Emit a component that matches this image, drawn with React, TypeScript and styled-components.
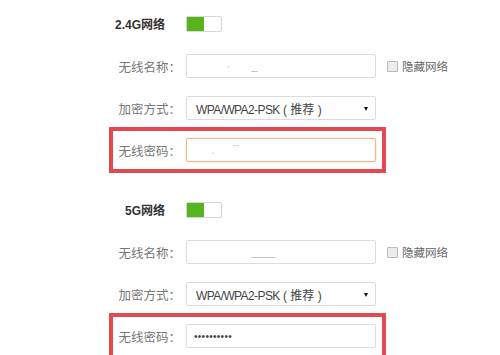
import React from 'react'
import styled, { createGlobalStyle } from 'styled-components'

const GlobalStyle = createGlobalStyle`
  html, body {
    margin: 0;
    padding: 0;
    background: #ffffff;
  }
  body {
    font-family: "Liberation Sans", "Noto Sans CJK SC", sans-serif;
    font-size: 12px;
    color: #666666;
  }
`

const Page = styled.div`
  width: 500px;
  height: 355px;
  overflow: hidden;
  padding: 2px 0 0 111px;
  box-sizing: border-box;
`

const Section = styled.div<{ $gap?: number }>`
  display: flex;
  flex-direction: column;
  margin-top: ${props => props.$gap || 0}px;
`

const Header = styled.div`
  display: flex;
  align-items: center;
  height: 43px;
`

const HeaderLabel = styled.div`
  width: 54px;
  text-align: right;
  margin-right: 21px;
  font-weight: bold;
  color: #333333;
  font-size: 12px;
`

const Toggle = styled.div<{ $on?: boolean }>`
  width: 36px;
  height: 16px;
  box-sizing: border-box;
  border: 1px solid #d6d6d6;
  border-radius: 2px;
  background: #ffffff;
  display: flex;
  &::before {
    content: '';
    width: 17px;
    height: 100%;
    background: ${props => (props.$on ? '#56b51d' : '#dddddd')};
  }
`

const Row = styled.div<{ $alert?: boolean }>`
  display: flex;
  align-items: center;
  height: 42px;
  width: 273px;
  outline: ${props => (props.$alert ? '4px solid #e34a4f' : 'none')};
  outline-offset: -2px;
`

const Label = styled.div`
  width: 70px;
  flex-shrink: 0;
  margin-right: 5px;
  text-align: right;
  color: #777777;
  font-size: 12.5px;
  font-family: "Noto Sans CJK SC", sans-serif;
`

const Field = styled.div<{ $focus?: boolean }>`
  width: 190px;
  height: 24px;
  flex-shrink: 0;
  box-sizing: border-box;
  border: 1px solid ${props => (props.$focus ? '#f3b783' : '#dcdcdc')};
  box-shadow: ${props => (props.$focus ? '0 0 2px rgba(243, 160, 90, 0.5)' : 'none')};
  border-radius: 2px;
  background: #ffffff;
  display: flex;
  align-items: center;
  padding: 0 9px;
  position: relative;
`

const Faint = styled.span`
  white-space: pre;
  color: #b5b5b5;
  font-size: 11px;
  line-height: 1;
`

const Dots = styled.span`
  color: #444444;
  font-size: 10px;
  letter-spacing: 0.3px;
  margin-left: -2px;
`

const SelectText = styled.span`
  color: #444444;
  font-size: 12px;
  letter-spacing: -0.6px;
  white-space: pre;
  & > em {
    font-style: normal;
    letter-spacing: 0;
    font-size: 12px;
  }
`

const Arrow = styled.span`
  position: absolute;
  right: 7px;
  top: 10px;
  width: 0;
  height: 0;
  border-left: 2.5px solid transparent;
  border-right: 2.5px solid transparent;
  border-top: 4px solid #111111;
`

const HideOption = styled.label`
  display: flex;
  align-items: center;
  flex-shrink: 0;
  margin-left: 11px;
  color: #666666;
  font-size: 11.5px;
  font-family: "Noto Sans CJK SC", sans-serif;
  white-space: nowrap;
`

const Box = styled.span`
  width: 9px;
  height: 9px;
  border: 1px solid #b8b8b8;
  background: #ececec;
  border-radius: 1px;
  margin-right: 4px;
`

type NetProps = {
  title: string,
  name: React.ReactNode,
  password: React.ReactNode,
  focus?: boolean,
  gap?: number
}

const Network = (props: NetProps) => (
  <Section $gap={props.gap}>
    <Header>
      <HeaderLabel>{props.title}</HeaderLabel>
      <Toggle $on />
    </Header>
    <Row>
      <Label>无线名称：</Label>
      <Field>{props.name}</Field>
      <HideOption><Box />隐藏网络</HideOption>
    </Row>
    <Row>
      <Label>加密方式：</Label>
      <Field>
        <SelectText>WPA/WPA2-PSK<em>{' ( 推荐 )'}</em></SelectText>
        <Arrow />
      </Field>
    </Row>
    <Row $alert>
      <Label>无线密码：</Label>
      <Field $focus={props.focus}>{props.password}</Field>
    </Row>
  </Section>
)

const App = () => (
  <>
    <GlobalStyle />
    <Page>
      <Network
        title="2.4G网络"
        name={<Faint>{'          ·       _'}</Faint>}
        password={<Faint>{'     .      ¯'}</Faint>}
        focus
      />
      <Network
        title="5G网络"
        gap={17}
        name={<Faint>{'                  ____'}</Faint>}
        password={<Dots>••••••••••</Dots>}
      />
    </Page>
  </>
)

export default App
